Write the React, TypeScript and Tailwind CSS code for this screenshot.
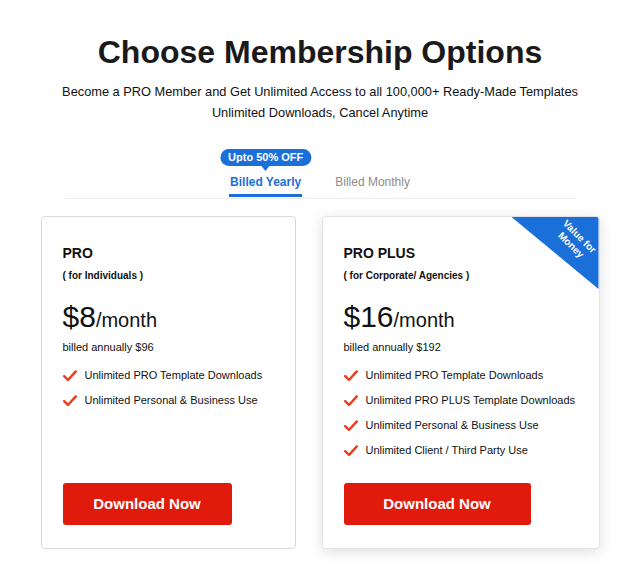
import React from 'react';

type Plan = {
  name: string;
  audience: string;
  price: string;
  billed: string;
  features: string[];
  featured?: boolean;
};

const plans: Plan[] = [
  {
    name: 'PRO',
    audience: '( for Individuals )',
    price: '$8',
    billed: 'billed annually $96',
    features: ['Unlimited PRO Template Downloads', 'Unlimited Personal & Business Use'],
  },
  {
    name: 'PRO PLUS',
    audience: '( for Corporate/ Agencies )',
    price: '$16',
    billed: 'billed annually $192',
    features: [
      'Unlimited PRO Template Downloads',
      'Unlimited PRO PLUS Template Downloads',
      'Unlimited Personal & Business Use',
      'Unlimited Client / Third Party Use',
    ],
    featured: true,
  },
];

function Check() {
  return (
    <svg width="14" height="12" viewBox="0 0 14 12" className="shrink-0">
      <path d="M1.2 6.2 L5 10 L12.8 1.4" fill="none" stroke="#ee3a1c" strokeWidth="2.4" strokeLinecap="round" strokeLinejoin="round" />
    </svg>
  );
}

function PlanCard({ plan }: { plan: Plan }) {
  return (
    <div
      className={
        plan.featured
          ? 'relative flex h-[333px] w-[278px] flex-col overflow-hidden rounded-[4px] border border-[#e3e3e3] bg-white pl-[21px] pt-[28px] pb-[23px] shadow-[0_3px_14px_rgba(0,0,0,0.13)]'
          : 'relative flex h-[333px] w-[255px] flex-col overflow-hidden rounded-[4px] border border-[#d9d9d9] bg-white pl-[21px] pt-[28px] pb-[23px]'
      }
    >
      {plan.featured && (
        <>
          <div className="absolute right-0 top-0 h-[72px] w-[87px] bg-[#1a6fd8] [clip-path:polygon(0_0,100%_0,100%_100%)]" />
          <div className="absolute left-[220px] top-[12px] w-[64px] rotate-45 text-center text-[10px] font-bold leading-[12px] text-white">
            <div>Value for</div>
            <div>Money</div>
          </div>
        </>
      )}
      <div className="text-[14px] font-bold leading-[16px] text-[#111]">{plan.name}</div>
      <div className="mt-[8px] text-[10px] font-bold leading-[14px] text-[#111]">{plan.audience}</div>
      <div className="mt-[17px] leading-[34px] text-[#111]">
        <span className="text-[30px]">{plan.price}</span>
        <span className="text-[20px]">/month</span>
      </div>
      <div className="mt-[1px] text-[11px] leading-[15px] text-[#111]">{plan.billed}</div>
      <ul className="mt-[13px] flex flex-col gap-[10px]">
        {plan.features.map((f) => (
          <li key={f} className="flex items-center gap-[8px] text-[11px] leading-[15px] text-[#111]">
            <Check />
            {f}
          </li>
        ))}
      </ul>
      <button
        className={
          plan.featured
            ? 'mt-auto h-[42px] w-[187px] rounded-[3px] bg-[#e01b0b] text-[15px] font-bold text-white'
            : 'mt-auto h-[42px] w-[169px] rounded-[3px] bg-[#e01b0b] text-[15px] font-bold text-white'
        }
      >
        Download Now
      </button>
    </div>
  );
}

export default function App() {
  return (
    <div className="flex min-h-[579px] w-[640px] flex-col items-center bg-white font-['Liberation_Sans',Arial,sans-serif]">
      <h1 className="pt-[34px] text-[32px] font-bold leading-[37px] text-[#1a1a1a]">Choose Membership Options</h1>
      <p className="mt-[10px] text-center text-[12.8px] leading-[21px] text-[#111]">
        Become a PRO Member and Get Unlimited Access to all 100,000+ Ready-Made Templates
        <br />
        Unlimited Downloads, Cancel Anytime
      </p>

      {/* Billing tabs */}
      <div className="mt-[51px] flex flex-col items-center">
        <div className="flex items-end gap-[34px]">
          <div className="relative flex flex-col items-center">
            <div className="absolute bottom-full left-1/2 mb-[8px] -translate-x-1/2 whitespace-nowrap rounded-full bg-[#1a6fd8] px-[8px] text-[11px] font-bold leading-[17px] text-white">
              Upto 50% OFF
              <span className="absolute left-1/2 top-full -translate-x-1/2 border-x-[4px] border-t-[5px] border-x-transparent border-t-[#1a6fd8]" />
            </div>
            <span className="text-[12px] font-bold leading-[16px] text-[#1a6fd8]">Billed Yearly</span>
            <div className="mt-[4px] h-[3px] w-[calc(100%+2px)] bg-[#1a6fd8]" />
          </div>
          <span className="mb-[7px] text-[12px] leading-[16px] text-[#8c8c8c]">Billed Monthly</span>
        </div>
        <div className="mt-[1px] h-px w-[511px] bg-[#ececec]" />
      </div>

      <div className="mt-[17px] flex gap-[26px]">
        {plans.map((p) => (
          <PlanCard key={p.name} plan={p} />
        ))}
      </div>
    </div>
  );
}
